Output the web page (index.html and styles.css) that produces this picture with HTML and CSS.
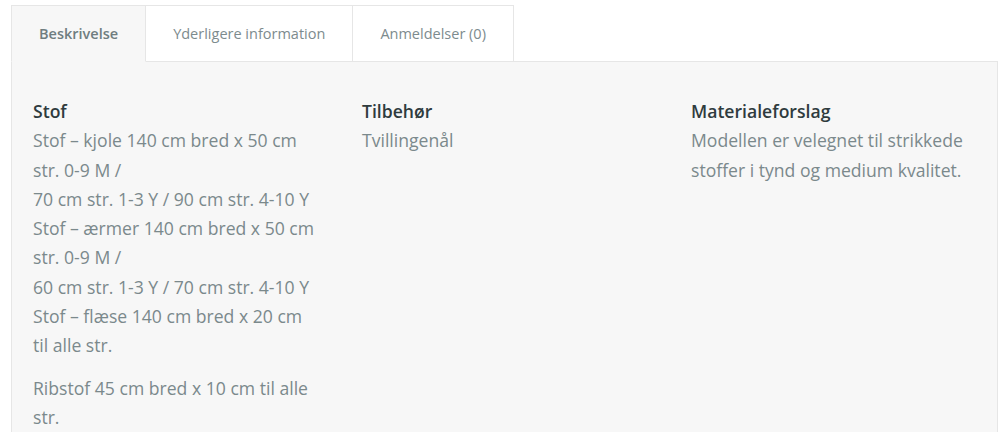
FILE: index.html
```html
<!DOCTYPE html>
<html lang="da">
<head>
    <meta charset="UTF-8">
    <meta name="viewport" content="width=device-width, initial-scale=1.0">
    <title>Beskrivelse</title>
    <link rel="stylesheet" href="styles.css">
</head>
<body>
    <div class="faner">
        <ul class="fane-liste">
            <li class="fane aktiv">Beskrivelse</li>
            <li class="fane">Yderligere information</li>
            <li class="fane">Anmeldelser (0)</li>
        </ul>
        <div class="panel">
            <div class="kolonne">
                <h4>Stof</h4>
                <p>Stof – kjole 140 cm bred x 50 cm str. 0-9 M /<br>
                70 cm str. 1-3 Y / 90 cm str. 4-10 Y<br>
                Stof – ærmer 140 cm bred x 50 cm str. 0-9 M /<br>
                60 cm str. 1-3 Y / 70 cm str. 4-10 Y<br>
                Stof – flæse 140 cm bred x 20 cm til alle str.</p>
                <p>Ribstof 45 cm bred x 10 cm til alle str.</p>
            </div>
            <div class="kolonne">
                <h4>Tilbehør</h4>
                <p>Tvillingenål</p>
            </div>
            <div class="kolonne">
                <h4>Materialeforslag</h4>
                <p>Modellen er velegnet til strikkede stoffer i tynd og medium kvalitet.</p>
            </div>
        </div>
    </div>
</body>
</html>
```

FILE: styles.css
```css
body{
    margin: 0;
    background: #fff;
    font-family: "Open Sans", "Liberation Sans", sans-serif;
    overflow: hidden;
}
.faner{
    padding: 5px 2px 0 11px;
}
.fane-liste{
    display: flex;
    list-style: none;
    margin: 0 0 -1px 0;
    padding: 0;
}
.fane{
    height: 55px;
    line-height: 55px;
    padding: 0 27px;
    font-size: 14.5px;
    color: #7d8b8e;
    background: #fff;
    border: 1px solid #e6e6e6;
    border-left: none;
}
.fane.aktiv{
    font-weight: 600;
    color: #6f7d80;
    background: #f7f7f7;
    border-left: 1px solid #e6e6e6;
    border-bottom-color: #f7f7f7;
}
.panel{
    box-sizing: border-box;
    display: grid;
    grid-template-columns: repeat(3, 282px);
    column-gap: 47px;
    padding: 35px 17px 0 21px;
    height: 371px;
    overflow: hidden;
    background: #f7f7f7;
    border: 1px solid #e6e6e6;
    border-bottom: none;
}
.kolonne h4{
    margin: 0;
    font-size: 17.6px;
    font-weight: 600;
    line-height: 29.3px;
    color: #2f3b3e;
}
.kolonne p{
    margin: 0 0 13px 0;
    font-size: 17.6px;
    line-height: 29.3px;
    color: #7b898c;
}
.kolonne p:last-child{
    margin-bottom: 0;
}
```
